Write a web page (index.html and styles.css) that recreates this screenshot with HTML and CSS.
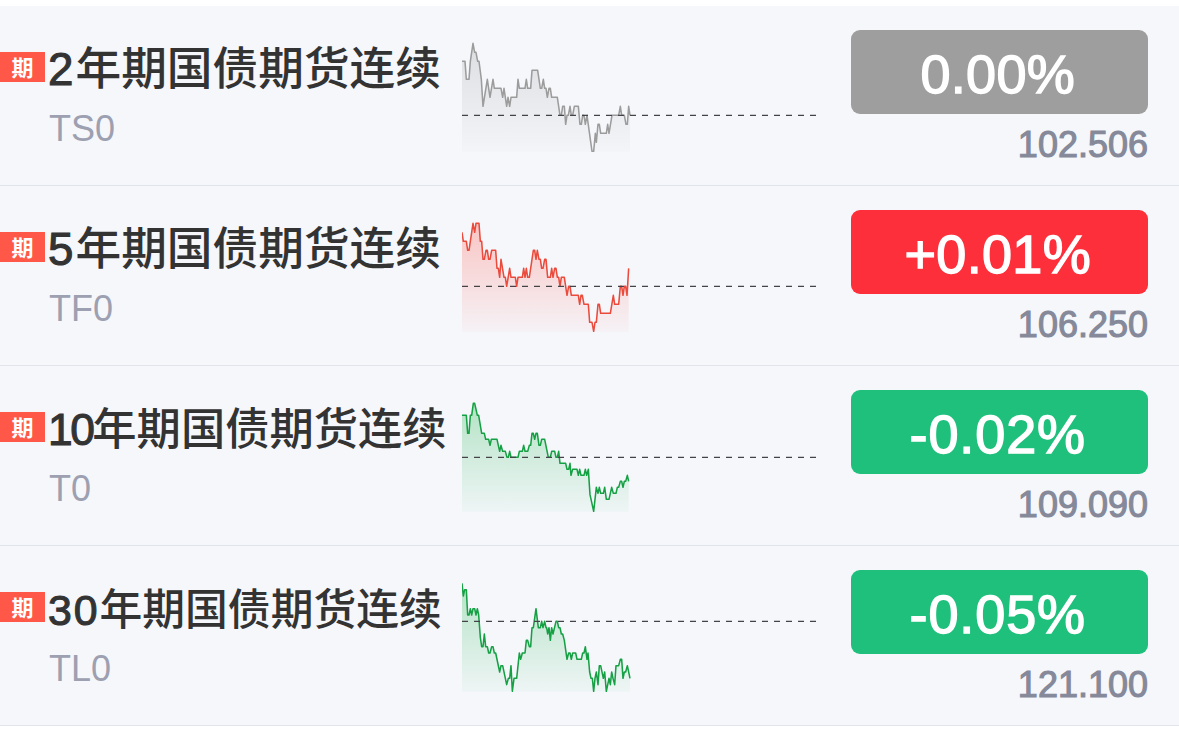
FILE: index.html
```
<!DOCTYPE html>
<html lang="zh-CN">
<head>
<meta charset="utf-8">
<title>国债期货</title>
<link rel="stylesheet" href="styles.css">
</head>
<body>
<main class="quotes">
  <section class="row flat">
    <span class="tag">期</span>
    <div class="info">
      <h2 class="name"><span class="num">2</span>年期国债期货连续</h2>
      <p class="code">TS0</p>
    </div>
    <svg class="chart" viewBox="21 0 1065 375">
      <defs><linearGradient id="g1" x1="0" y1="0" x2="0" y2="1"><stop class="g-top" offset="0"/><stop class="g-end" offset="1"/></linearGradient></defs>
      <path fill="url(#g1)" d="M21 79H30L34 133H42L46 79L54 25L59 52H63L68 79H72L79 133L84 214L97 133L105 187L114 133L118 160H138L143 187L147 160L155 214L159 187L164 214L168 187H185L189 133L193 160H210L214 133L218 160H227L231 106H248L256 160H260L265 133L269 160H273L277 187L282 160H286L290 187H307L315 241H319L323 214H328L332 268L336 241H340L345 214L349 241H353L358 214H370L375 268H379L383 241H387L391 268L396 241L411 349H416L421 295L424 322L429 268H433L437 295H454L458 268L462 295L471 241H491L496 214L500 241H508L513 268H517L521 214L525 241V350H21Z"/>
      <polyline class="line" points="21,79 30,79 34,133 42,133 46,79 54,25 59,52 63,52 68,79 72,79 79,133 84,214 97,133 105,187 114,133 118,160 138,160 143,187 147,160 155,214 159,187 164,214 168,187 185,187 189,133 193,160 210,160 214,133 218,160 227,160 231,106 248,106 256,160 260,160 265,133 269,160 273,160 277,187 282,160 286,160 290,187 307,187 315,241 319,241 323,214 328,214 332,268 336,241 340,241 345,214 349,241 353,241 358,214 370,214 375,268 379,268 383,241 387,241 391,268 396,241 411,349 416,349 421,295 424,322 429,268 433,268 437,295 454,295 458,268 462,295 471,241 491,241 496,214 500,241 508,241 513,268 517,268 521,214 525,241"/>
      <path class="base" d="M21 241H1084"/>
    </svg>
    <div class="quote"><strong class="change">0.00%</strong><span class="price">102.506</span></div>
  </section>

  <section class="row up">
    <span class="tag">期</span>
    <div class="info">
      <h2 class="name"><span class="num">5</span>年期国债期货连续</h2>
      <p class="code">TF0</p>
    </div>
    <svg class="chart" viewBox="21 0 1065 375">
      <defs><linearGradient id="g2" x1="0" y1="0" x2="0" y2="1"><stop class="g-top" offset="0"/><stop class="g-end" offset="1"/></linearGradient></defs>
      <path fill="url(#g2)" d="M21 52L25 79H34L38 106H42L54 25L59 52L63 25H72L76 79H80L84 133H88L93 106H97L101 133H105L110 106H122L126 160H130L134 187L138 133L147 187H151L155 214L164 160L168 187H181L185 214L189 187H202L206 160L210 187L214 160L218 187H223L235 106H239L243 133L247 106L252 133H256L260 160H264L269 133H273L278 187H286L290 160L294 187L299 160H303L307 187H311L315 214L319 187H328L336 241L341 214H345L349 241H370L374 268L378 241H382L387 268H400L404 322H411L416 349L420 322H424L429 268H433L437 295H466L475 241L479 268H491L496 214H500L504 241L508 214H512L516 241L521 160V350H21Z"/>
      <polyline class="line" points="21,52 25,79 34,79 38,106 42,106 54,25 59,52 63,25 72,25 76,79 80,79 84,133 88,133 93,106 97,106 101,133 105,133 110,106 122,106 126,160 130,160 134,187 138,133 147,187 151,187 155,214 164,160 168,187 181,187 185,214 189,187 202,187 206,160 210,187 214,160 218,187 223,187 235,106 239,106 243,133 247,106 252,133 256,133 260,160 264,160 269,133 273,133 278,187 286,187 290,160 294,187 299,160 303,160 307,187 311,187 315,214 319,187 328,187 336,241 341,214 345,214 349,241 370,241 374,268 378,241 382,241 387,268 400,268 404,322 411,322 416,349 420,322 424,322 429,268 433,268 437,295 466,295 475,241 479,268 491,268 496,214 500,214 504,241 508,214 512,214 516,241 521,160"/>
      <path class="base" d="M21 214H1084"/>
    </svg>
    <div class="quote"><strong class="change">+0.01%</strong><span class="price">106.250</span></div>
  </section>

  <section class="row down">
    <span class="tag">期</span>
    <div class="info">
      <h2 class="name name-m"><span class="num">10</span>年期国债期货连续</h2>
      <p class="code">T0</p>
    </div>
    <svg class="chart" viewBox="21 0 1065 375">
      <defs><linearGradient id="g3" x1="0" y1="0" x2="0" y2="1"><stop class="g-top" offset="0"/><stop class="g-end" offset="1"/></linearGradient></defs>
      <path fill="url(#g3)" d="M21 61H34L38 115H42L46 61H50L55 25H59L67 61H71L80 115H88L92 133H101L105 151L109 133H126L134 169L138 151L143 169H151L156 187H160L164 169L168 187H189L193 169H202L206 151L210 169H218L223 151H227L231 115H235L239 133L243 115H247L252 151H256L260 133H269L280 187H286L290 169H299L303 187H307L311 169L315 205H332L336 223H341L345 205L348 241L353 223H366L370 241L374 223L378 241H387L391 223L395 241L400 223L405 299L416 349L424 277L429 295L433 277L437 295H445L449 277L454 313H462L470 277L475 295H483L487 277H491L496 259H500L504 277L508 259H512L517 241L521 259V350H21Z"/>
      <polyline class="line" points="21,61 34,61 38,115 42,115 46,61 50,61 55,25 59,25 67,61 71,61 80,115 88,115 92,133 101,133 105,151 109,133 126,133 134,169 138,151 143,169 151,169 156,187 160,187 164,169 168,187 189,187 193,169 202,169 206,151 210,169 218,169 223,151 227,151 231,115 235,115 239,133 243,115 247,115 252,151 256,151 260,133 269,133 280,187 286,187 290,169 299,169 303,187 307,187 311,169 315,205 332,205 336,223 341,223 345,205 348,241 353,223 366,223 370,241 374,223 378,241 387,241 391,223 395,241 400,223 405,299 416,349 424,277 429,295 433,277 437,295 445,295 449,277 454,313 462,313 470,277 475,295 483,295 487,277 491,277 496,259 500,259 504,277 508,259 512,259 517,241 521,259"/>
      <path class="base" d="M21 187H1084"/>
    </svg>
    <div class="quote"><strong class="change wide">-0.02%</strong><span class="price">109.090</span></div>
  </section>

  <section class="row down">
    <span class="tag">期</span>
    <div class="info">
      <h2 class="name name-s"><span class="num">30</span>年期国债期货连续</h2>
      <p class="code">TL0</p>
    </div>
    <svg class="chart" viewBox="21 0 1065 375">
      <defs><linearGradient id="g4" x1="0" y1="0" x2="0" y2="1"><stop class="g-top" offset="0"/><stop class="g-end" offset="1"/></linearGradient></defs>
      <path fill="url(#g4)" d="M21 25L25 63L29 44H34L38 120H42L46 101L50 120L54 101H59L63 120L67 101L71 120L76 187L80 215H84L88 177L92 215H97L101 234H105L110 215H114L118 234H122L134 291L138 272H143L155 329L160 310H164L168 272L172 349L177 310H185L193 234L197 253L202 234H210L214 196H218L223 215H227L231 158H235L243 101L250 158H256L260 139L264 158L269 139L273 158H275L278 177L282 158L286 196L290 158L294 177L303 139H307L311 158H315L319 177H323L328 196L336 253L341 234H345L349 253L353 234H362L366 253H379L383 234H387L391 215L396 253L399 234L404 291L408 310H412L416 349L420 310L424 291L429 329L433 272H437L445 310L449 291L454 349L462 310L466 329L470 291L474 310L479 329L483 272H491L496 253H500L504 310L508 291H512L517 272L525 310V350H21Z"/>
      <polyline class="line" points="21,25 25,63 29,44 34,44 38,120 42,120 46,101 50,120 54,101 59,101 63,120 67,101 71,120 76,187 80,215 84,215 88,177 92,215 97,215 101,234 105,234 110,215 114,215 118,234 122,234 134,291 138,272 143,272 155,329 160,310 164,310 168,272 172,349 177,310 185,310 193,234 197,253 202,234 210,234 214,196 218,196 223,215 227,215 231,158 235,158 243,101 250,158 256,158 260,139 264,158 269,139 273,158 275,158 278,177 282,158 286,196 290,158 294,177 303,139 307,139 311,158 315,158 319,177 323,177 328,196 336,253 341,234 345,234 349,253 353,234 362,234 366,253 379,253 383,234 387,234 391,215 396,253 399,234 404,291 408,310 412,310 416,349 420,310 424,291 429,329 433,272 437,272 445,310 449,291 454,349 462,310 466,329 470,291 474,310 479,329 483,272 491,272 496,253 500,253 504,310 508,291 512,291 517,272 525,310"/>
      <path class="base" d="M21 139H1084"/>
    </svg>
    <div class="quote"><strong class="change wide">-0.05%</strong><span class="price">121.100</span></div>
  </section>
</main>
</body>
</html>
```
FILE: styles.css
```
* { box-sizing: border-box; }
body {
  margin: 0;
  background: #fff;
  font-family: "Liberation Sans", "Noto Sans CJK SC", sans-serif;
}
.quotes { padding-top: 6px; }
.row {
  display: grid;
  grid-template-columns: 45px 417px 355px 1fr;
  align-items: start;
  height: 180px;
  background: #f5f7fb;
  border-bottom: 1px solid #e2e4ec;
}
.flat { --tone: #9e9e9e; --line: #9c9c9c; --fill: #d6d6da; }
.up { --tone: #fd2f3b; --line: #ea4b3c; --fill: #fbb4b2; }
.down { --tone: #1ec07c; --line: #15a044; --fill: #9fdcb4; }
.tag {
  height: 30px;
  margin-top: 46px;
  background: #ff5848;
  color: #fff;
  font: 700 22px/28px "Noto Sans CJK SC", sans-serif;
  text-align: center;
}
.info { padding: 29px 0 0 3px; }
.name {
  display: flex;
  align-items: baseline;
  height: 60px;
  margin: 0;
  color: #333;
  font: 500 45.7px/60px "Noto Sans CJK SC", sans-serif;
  white-space: nowrap;
}
.name-m { font-size: 44.3px; padding-top: 1px; }
.name-s { font-size: 42.8px; padding-top: 1px; }
.num {
  font-family: "Liberation Sans", sans-serif;
  font-weight: 400;
  letter-spacing: .045em;
  -webkit-text-stroke: 1.1px #333;
}
.name-m .num { letter-spacing: -2.5px; }
.code {
  margin: 13px 0 0 1px;
  color: #9da0b0;
  font-size: 36px;
  line-height: 42px;
}
.chart { display: block; width: 355px; height: 125px; margin-top: 29px; }
.line { fill: none; stroke: var(--line); stroke-width: 4.6; stroke-linejoin: round; }
.base { fill: none; stroke: #444448; stroke-width: 4; stroke-dasharray: 18 18; }
.g-top { stop-color: var(--fill); stop-opacity: .75; }
.g-end { stop-color: var(--fill); stop-opacity: .08; }
.quote {
  display: flex;
  flex-direction: column;
  align-items: flex-end;
  padding: 24px 31px 0 0;
}
.change {
  width: 297.5px;
  height: 84px;
  padding-right: 3px;
  border-radius: 9px;
  background: var(--tone);
  color: #fff;
  font-size: 54px;
  font-weight: 400;
  letter-spacing: .3px;
  line-height: 89px;
  text-align: center;
  -webkit-text-stroke: 1.4px #fff;
}
.wide { letter-spacing: .9px; }
.price {
  margin-top: 10px;
  color: #858999;
  font-size: 36px;
  line-height: 42px;
  -webkit-text-stroke: 1.1px #858999;
}
```
